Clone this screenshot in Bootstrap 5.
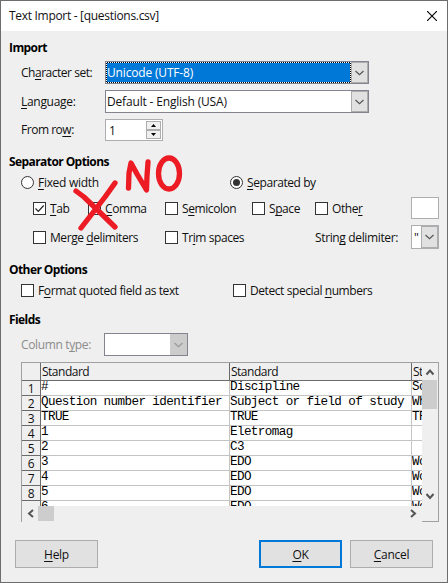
<!DOCTYPE html>
<html lang="en">
<head>
<meta charset="utf-8">
<title>Text Import - [questions.csv]</title>
<meta name="viewport" content="width=device-width, initial-scale=1">
<link href="https://cdn.jsdelivr.net/npm/bootstrap@5.3.0/dist/css/bootstrap.min.css" rel="stylesheet">
<style>
  body { font-family: "Open Sans", "Noto Sans", sans-serif; font-size: 12px; line-height: 16px; color: #111; letter-spacing: -.3px; background: #efefef; overflow: hidden; }
  .dialog { width: 448px; height: 583px; background: #efefef; border: 1px solid #6e6c6e; }
  .titlebar { height: 30px; background: #fff; padding: 0 10px 0 8px; }
  .sect { font-size: 12px; font-weight: 700; margin: 0; padding-left: 8px; height: 16px; line-height: 16px; letter-spacing: -.58px; color: #000; }
  .line { display: flex; align-items: center; padding-left: 20px; white-space: nowrap; }
  .lbl { width: 84px; flex: none; letter-spacing: -.48px; }
  u { text-underline-offset: 2px; text-decoration-thickness: 1px; text-decoration-skip-ink: none; }
  .combo { height: 23px; border: 1px solid #82848f; background: #fff; display: flex; align-items: stretch; border-radius: 0; flex: none; }
  .combo .val { flex: 1; padding-left: 1px; line-height: 21px; overflow: hidden; letter-spacing: -.17px; }
  .combo .drop { width: 17px; background: #e1e1e1; border: 1px solid #adadad; display: flex; align-items: center; justify-content: center; flex: none; }
  .combo .sel { color: #fff; border: 1px dotted #fff; padding-left: 0; line-height: 19px; background: linear-gradient(#0078d7, #0078d7) padding-box, #000 border-box; }
  .wide { width: 264px; }
  .spin { width: 58px; height: 22px; border: 1px solid #adadb2; background: #fff; display: flex; padding: 1px; }
  .spin .num { flex: 1; padding-left: 2px; line-height: 19px; }
  .spin button { display: flex; align-items: center; justify-content: center; width: 15px; height: 9px; padding: 0; background: #f0f0f0; border: 1px solid #adadad; }
  .box { width: 13px; height: 13px; border: 1px solid #333; background: #fff; flex: none; display: inline-flex; margin-right: 4px; }
  .ring { width: 13px; height: 13px; border: 1px solid #333; border-radius: 50%; background: #fff; flex: none; display: inline-flex; align-items: center; justify-content: center; margin-right: 4px; }
  .ring i { width: 7px; height: 7px; border-radius: 50%; background: #333; }
  .opt { display: inline-flex; align-items: center; flex: none; letter-spacing: -.42px; }
  .opt > span:last-child { padding-top: 1px; }
  .preview { margin-left: 20px; width: 418px; height: 160px; border-top: 1px solid #a0a0a0; border-left: 1px solid #a0a0a0; border-right: 1px solid #a0a0a0; }
  .sheet { width: 400px; height: 143px; overflow: hidden; background: #fff; }
  .sheet table { table-layout: fixed; width: 571px; border-collapse: separate; border-spacing: 0; }
  .sheet th, .sheet td { padding: 0; overflow: hidden; white-space: nowrap; font-weight: 400; }
  .sheet thead th { height: 18px; line-height: 17px; background: #efefef; border-right: 1px solid #6b6b6b; border-bottom: 1px solid #6b6b6b; padding-left: 1px; letter-spacing: -.5px; }
  .sheet tbody th { height: 15px; line-height: 14px; background: #efefef; border-right: 1px solid #6b6b6b; border-bottom: 1px solid #6b6b6b; text-align: center; }
  .sheet tbody td { height: 15px; line-height: 13px; vertical-align: top; border-right: 1px solid #c4c4c4; border-bottom: 1px solid #c4c4c4; font-family: "Liberation Mono", monospace; font-size: 12.6px; letter-spacing: -.6px; color: #000; }
  .sheet tbody th span { display: block; height: 14px; line-height: 15px; }
  .vbar { width: 16px; }
  .thumb { background: #cdcdcd; }
  .push { width: 83px; height: 28px; background: #e1e1e1; border: 1px solid #adadad; border-radius: 0; padding: 0; font-size: 12px; line-height: 27px; color: #111; letter-spacing: -.3px; }
  .push.main { border: 2px solid #0078d7; line-height: 25px; }
  .scrawl { position: absolute; left: 70px; top: 150px; }
</style>
</head>
<body>
<div class="dialog">
  <div class="titlebar d-flex align-items-center justify-content-between">
    <span>Text Import - [questions.csv]</span>
    <svg width="10" height="10" viewBox="0 0 10 10"><path d="M0 0L10 10M10 0L0 10" stroke="#000" stroke-width="1.1"/></svg>
  </div>

  <h2 class="sect" style="margin-top:9px">Import</h2>
  <div class="line" style="margin-top:5px"><span class="lbl">Ch<u>a</u>racter set:</span>
    <div class="combo wide"><span class="val sel">Unicode (UTF-8)</span><span class="drop"><svg width="9" height="6"><path d="M.5 1L4.5 4.7L8.5 1" fill="none" stroke="#555" stroke-width="1.2"/></svg></span></div></div>
  <div class="line" style="margin-top:6px"><span class="lbl" style="letter-spacing:-.3px"><u>L</u>anguage:</span>
    <div class="combo wide"><span class="val">Default - English (USA)</span><span class="drop"><svg width="9" height="6"><path d="M.5 1L4.5 4.7L8.5 1" fill="none" stroke="#555" stroke-width="1.2"/></svg></span></div></div>
  <div class="line" style="margin-top:6px"><span class="lbl">From ro<u>w</u>:</span>
    <div class="spin"><span class="num">1</span><span class="d-flex flex-column"><button><svg width="5" height="3"><path d="M0 3L2.5 0L5 3z"/></svg></button><button><svg width="5" height="3"><path d="M0 0L2.5 3L5 0z"/></svg></button></span></div></div>

  <h2 class="sect" style="margin-top:13px">Separator Options</h2>
  <div class="line" style="margin-top:4px"><span class="opt" style="width:209px;letter-spacing:-.3px"><i class="ring"></i><span><u>F</u>ixed width</span></span><span class="opt"><span class="ring"><i></i></span><span><u>S</u>eparated by</span></span></div>
  <div class="line" style="height:22px;margin-top:6px;padding-left:32px">
    <span class="opt" style="width:55px"><span class="box"><svg width="11" height="11"><path d="M1.5 5.5L4.3 8.3L9.7 2.5" fill="none" stroke="#222" stroke-width="1.2"/></svg></span><span><u>T</u>ab</span></span>
    <span class="opt" style="width:77px"><i class="box"></i><span><u>C</u>omma</span></span>
    <span class="opt" style="width:87px"><i class="box"></i><span>S<u>e</u>micolon</span></span>
    <span class="opt" style="width:63px"><i class="box"></i><span>S<u>p</u>ace</span></span>
    <span class="opt" style="width:96px"><i class="box"></i><span>Othe<u>r</u></span></span>
    <span class="bg-white" style="width:28px;height:22px;border:1px solid #adadb2"></span>
  </div>
  <div class="line" style="margin-top:6px;height:24px;padding-left:32px">
    <span class="opt" style="width:132px"><i class="box"></i><span>Merge <u>d</u>elimiters</span></span>
    <span class="opt" style="width:150px"><i class="box"></i><span>Tr<u>i</u>m spaces</span></span>
    <span class="opt" style="width:96px;letter-spacing:-.36px"><span>Strin<u>g</u> delimiter:</span></span>
    <div class="combo" style="width:28px;height:24px;border-color:#adadb2"><span class="val" style="padding-left:2px;line-height:23px">"</span><span class="drop"><svg width="9" height="6"><path d="M.5 1L4.5 4.7L8.5 1" fill="none" stroke="#555" stroke-width="1.2"/></svg></span></div>
  </div>

  <h2 class="sect" style="margin-top:13px">Other Options</h2>
  <div class="line" style="margin-top:4px"><span class="opt" style="width:212px;letter-spacing:-.39px"><i class="box"></i><span>F<u>o</u>rmat quoted field as text</span></span><span class="opt"><i class="box"></i><span>Detect special <u>n</u>umbers</span></span></div>

  <h2 class="sect" style="margin-top:13px">Fields</h2>
  <div class="line" style="margin-top:5px;color:#8c8c8c"><span class="lbl" style="width:83px;letter-spacing:-.36px">Column t<u>y</u>pe:</span>
    <div class="combo" style="width:84px"><span class="val"></span><span class="drop" style="background:#ccc;border-color:#ccc"><svg width="9" height="6"><path d="M.5 1L4.5 4.7L8.5 1" fill="none" stroke="#999" stroke-width="1.2"/></svg></span></div></div>

  <div class="preview" style="margin-top:6px">
    <div class="d-flex">
      <div class="sheet">
        <table>
          <colgroup><col style="width:19px"><col style="width:189px"><col style="width:182px"><col style="width:181px"></colgroup>
          <thead><tr><th></th><th>Standard</th><th>Standard</th><th>Standard</th></tr></thead>
          <tbody>
            <tr><th><span>1</span></th><td>#</td><td>Discipline</td><td>Source</td></tr>
            <tr><th><span>2</span></th><td>Question number identifier</td><td>Subject or field of study</td><td>Where</td></tr>
            <tr><th><span>3</span></th><td>TRUE</td><td>TRUE</td><td>TRUE</td></tr>
            <tr><th><span>4</span></th><td>1</td><td>Eletromag</td><td></td></tr>
            <tr><th><span>5</span></th><td>2</td><td>C3</td><td></td></tr>
            <tr><th><span>6</span></th><td>3</td><td>EDO</td><td>Work</td></tr>
            <tr><th><span>7</span></th><td>4</td><td>EDO</td><td>Work</td></tr>
            <tr><th><span>8</span></th><td>5</td><td>EDO</td><td>Work</td></tr>
            <tr><th></th><td>6</td><td>EDO</td><td>Work</td></tr>
          </tbody>
        </table>
      </div>
      <div class="vbar d-flex flex-column">
        <svg width="16" height="17"><path d="M4.500 11.500L8 7.500L11.500 11.500" fill="none" stroke="#555" stroke-width="2"/></svg>
        <div class="thumb" style="width:15px;height:29px"></div>
        <svg class="mt-auto" width="16" height="17"><path d="M4.500 5L8 9L11.500 5" fill="none" stroke="#555" stroke-width="2"/></svg>
      </div>
    </div>
    <div class="d-flex" style="height:16px;width:416px">
      <svg width="16" height="15"><path d="M11 4L7 7.500L11 11" fill="none" stroke="#555" stroke-width="2"/></svg>
      <div class="thumb" style="width:16px;height:15px"></div>
      <svg class="ms-auto" width="16" height="15"><path d="M5 4L9 7.500L5 11" fill="none" stroke="#555" stroke-width="2"/></svg>
      <div style="width:16px;border-bottom:1px solid #a0a0a0"></div>
    </div>
  </div>

  <div class="d-flex" style="margin-top:18px;padding-left:14px">
    <button class="btn push"><u>H</u>elp</button>
    <button class="btn push main" style="margin-left:161px"><u>O</u>K</button>
    <button class="btn push" style="margin-left:8px"><u>C</u>ancel</button>
  </div>
</div>
<svg class="scrawl" width="120" height="85" viewBox="70 150 120 85" fill="none" stroke="#ed1c24" stroke-width="5.300" stroke-linecap="round" stroke-linejoin="round">
  <path d="M76 191L84 197L115 227M115 183L105 197L81 228"/>
  <path d="M128.500 188L129 173L131 163L137 174L146.500 190L147 176L148 162"/>
  <ellipse cx="169" cy="173.500" rx="10.500" ry="15.500"/>
</svg>
<script src="https://cdn.jsdelivr.net/npm/bootstrap@5.3.0/dist/js/bootstrap.bundle.min.js"></script>
</body>
</html>
